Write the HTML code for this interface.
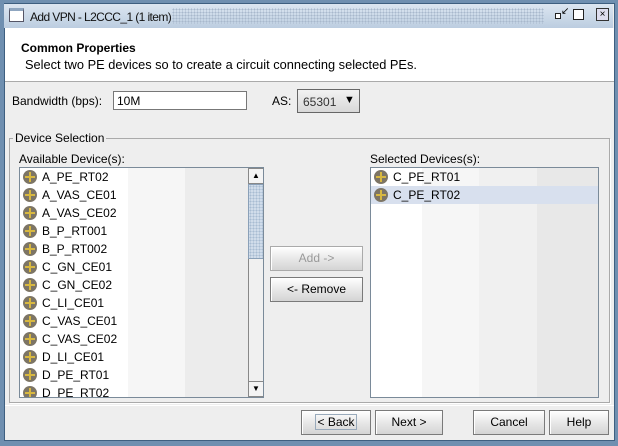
<!DOCTYPE html>
<html><head><style>
*{margin:0;padding:0;box-sizing:border-box}
body{width:618px;height:446px;overflow:hidden;background:#6f8fb0;font-family:"Liberation Sans",sans-serif;font-size:12px;color:#000;position:relative}
.a{position:absolute}
.win{left:4px;top:3px;width:611px;height:438px;background:#eeeeee;border:1px solid #3e5f80}
.title{left:4px;top:4px;width:609px;height:24px;background:linear-gradient(#dce6f1,#bccde0)}
.btn{position:absolute;border:1px solid #7a7a7a;background:linear-gradient(#ffffff,#e4e4e4 60%,#d4d4d4);text-align:center;line-height:22px;font-size:12px;box-shadow:inset 1px 1px 0 #fff}
.list{position:absolute;border:1px solid #7a8a99;background:linear-gradient(90deg,#fff 0,#fff 108px,#f6f6f6 108px,#f6f6f6 165px,#ececec 165px);overflow:hidden}
.row{height:18px;line-height:18px;padding-left:22px;position:relative;font-size:12px}
.row i{position:absolute;left:3px;top:2px;width:14px;height:14px;border-radius:50%;background:#7d7565}
.row i:before{content:"";position:absolute;left:6px;top:2px;width:2px;height:10px;background:#d8b840}
.row i:after{content:"";position:absolute;left:2px;top:6px;width:10px;height:2px;background:#d8b840}
</style></head><body>
<div class="a win"></div>
<div class="a title"></div>
<div class="a" style="left:9px;top:8px;width:15px;height:14px;border:1px solid #556;background:#fff;border-top:3px solid #8fa6c0"></div>
<div class="a" style="left:172px;top:8px;width:372px;height:16px;background-image:radial-gradient(#a8b8cc 0.8px,transparent 1px);background-size:3px 3px"></div>
<div class="a" style="left:30px;top:10px;font-size:12px;letter-spacing:-0.6px;color:#111;white-space:nowrap">Add VPN - L2CCC_1 (1 item)</div>
<div class="a" style="left:555px;top:13px;width:6px;height:6px;border:1px solid #222;background:#fff"></div>
<div class="a" style="left:561px;top:7px;font-size:10px;line-height:10px">&#8601;</div>
<div class="a" style="left:573px;top:9px;width:11px;height:11px;border:1px solid #222;background:#fff"></div>
<div class="a" style="left:596px;top:8px;width:13px;height:13px;border:1px solid #333;background:#dde;font-size:10px;line-height:11px;text-align:center">&#215;</div>
<div class="a" style="left:5px;top:28px;width:609px;height:54px;background:#fff;border-bottom:1px solid #aaa"></div>
<div class="a" style="left:21px;top:41px;font-weight:bold;font-size:12px">Common Properties</div>
<div class="a" style="left:25px;top:57px;font-size:12.8px;white-space:nowrap">Select two PE devices so to create a circuit connecting selected PEs.</div>
<div class="a" style="left:12px;top:94px">Bandwidth (bps):</div>
<div class="a" style="left:113px;top:91px;width:134px;height:19px;border:1px solid #777;background:#fff;padding:2px 3px">10M</div>
<div class="a" style="left:272px;top:94px">AS:</div>
<div class="a" style="left:297px;top:89px;width:63px;height:24px;border:1px solid #666;background:linear-gradient(#f2f2f2,#d8d8d8);padding:5px 0 0 5px;color:#333">65301 <span style="position:absolute;left:46px;top:4px;font-size:11px;color:#000">&#9660;</span></div>
<div class="a" style="left:9px;top:138px;width:601px;height:265px;border:1px solid #aaa;box-shadow:1px 1px 0 #fff"></div>
<div class="a" style="left:13px;top:131px;background:#eee;padding:0 2px">Device Selection</div>
<div class="a" style="left:19px;top:152px">Available Device(s):</div>
<div class="list" style="left:19px;top:167px;width:245px;height:231px">
<div>
<div class="row"><i></i>A_PE_RT02</div><div class="row"><i></i>A_VAS_CE01</div><div class="row"><i></i>A_VAS_CE02</div><div class="row"><i></i>B_P_RT001</div><div class="row"><i></i>B_P_RT002</div><div class="row"><i></i>C_GN_CE01</div><div class="row"><i></i>C_GN_CE02</div><div class="row"><i></i>C_LI_CE01</div><div class="row"><i></i>C_VAS_CE01</div><div class="row"><i></i>C_VAS_CE02</div><div class="row"><i></i>D_LI_CE01</div><div class="row"><i></i>D_PE_RT01</div><div class="row"><i></i>D_PE_RT02</div>
</div>
<div class="a" style="left:228px;top:0;width:16px;height:229px;background:#f0f0f0;border-left:1px solid #888"></div>
<div class="a" style="left:228px;top:0;width:16px;height:16px;border:1px solid #888;background:#f4f4f4;font-size:8px;text-align:center;line-height:14px">&#9650;</div>
<div class="a" style="left:228px;top:16px;width:16px;height:75px;background:#d0dcea;background-image:radial-gradient(#a8bcd2 0.8px,transparent 1px);background-size:3px 3px;border:1px solid #8aa0b8"></div>
<div class="a" style="left:228px;top:213px;width:16px;height:16px;border:1px solid #888;background:#f4f4f4;font-size:8px;text-align:center;line-height:14px">&#9660;</div>
</div>
<div class="btn" style="left:270px;top:246px;width:93px;height:25px;color:#999;border-color:#aaa">Add -&gt;</div>
<div class="btn" style="left:270px;top:277px;width:93px;height:25px">&lt;- Remove</div>
<div class="a" style="left:370px;top:152px">Selected Devices(s):</div>
<div class="list" style="left:370px;top:167px;width:229px;height:231px;background:linear-gradient(90deg,#fff 0,#fff 51px,#f6f6f6 51px,#f6f6f6 108px,#f0f0f0 108px,#f0f0f0 166px,#e8e8e8 166px)">
<div class="row"><i></i>C_PE_RT01</div>
<div class="row" style="background:#d8e0ee"><i></i>C_PE_RT02</div>
</div>
<div class="a" style="left:5px;top:405px;width:609px;height:1px;background:#aaa;border-bottom:1px solid #fff"></div>
<div class="btn" style="left:301px;top:410px;width:70px;height:25px"><span style="border:1px solid #9ab;padding:0 1px">&lt; Back</span></div>
<div class="btn" style="left:375px;top:410px;width:68px;height:25px">Next &gt;</div>
<div class="btn" style="left:473px;top:410px;width:72px;height:25px">Cancel</div>
<div class="btn" style="left:549px;top:410px;width:60px;height:25px">Help</div>
</body></html>
